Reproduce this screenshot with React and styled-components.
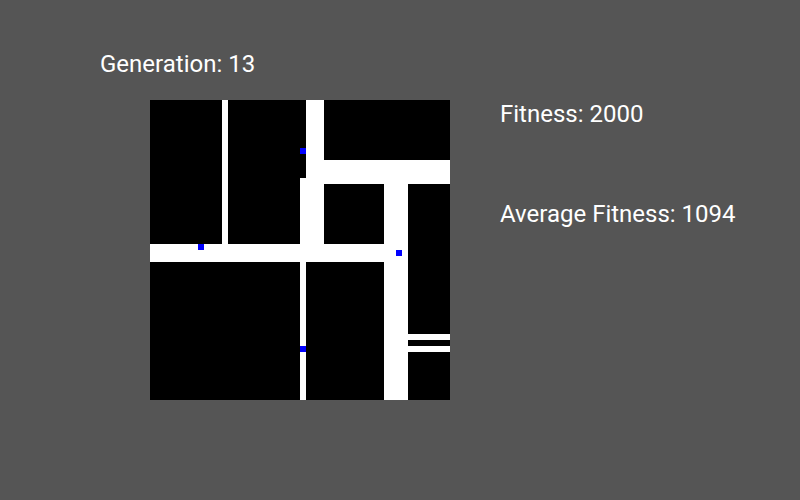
import React from 'react';
import styled, {createGlobalStyle} from "styled-components";

const GlobalStyle = createGlobalStyle`
  html, body {
    margin: 0;
    background-color: #555555;
  }
`

const StyledPage = styled.div`
  display: flex;
  width: 800px;
  height: 500px;
  font-family: Roboto, "Liberation Sans", sans-serif;
  color: white;
`

const StyledLeft = styled.div`
  display: flex;
  flex-direction: column;
  margin-left: 100px;
  padding-top: 50px;
`

const StyledRight = styled.div`
  display: flex;
  flex-direction: column;
  gap: 72px;
  margin-left: 50px;
  padding-top: 100px;
`

const StyledLabel = styled.div`
  font-size: 24px;
  line-height: 28px;
  white-space: nowrap;
`

const StyledBoard = styled.svg`
  display: block;
  margin-top: 22px;
  margin-left: 50px;
  background-color: black;
`

const walls = [
    {x: 72, y: 0, w: 6, h: 144},
    {x: 0, y: 144, w: 234, h: 18},
    {x: 156, y: 0, w: 18, h: 78},
    {x: 150, y: 78, w: 24, h: 66},
    {x: 156, y: 60, w: 144, h: 24},
    {x: 234, y: 84, w: 24, h: 216},
    {x: 150, y: 162, w: 6, h: 138},
    {x: 258, y: 234, w: 42, h: 6},
    {x: 258, y: 246, w: 42, h: 6},
]

const agents = [
    {x: 48, y: 144},
    {x: 150, y: 48},
    {x: 246, y: 150},
    {x: 150, y: 246},
]

const Board = () => (
    <StyledBoard width="300" height="300" viewBox="0 0 300 300" shapeRendering="crispEdges">
        {walls.map((r, i) => <rect key={i} x={r.x} y={r.y} width={r.w} height={r.h} fill="white"/>)}
        {agents.map((a, i) => <rect key={i} x={a.x} y={a.y} width="6" height="6" fill="#0000ff"/>)}
    </StyledBoard>
)

const App = () => {
    return (
        <>
            <GlobalStyle/>
            <StyledPage>
                <StyledLeft>
                    <StyledLabel>Generation: 13</StyledLabel>
                    <Board/>
                </StyledLeft>
                <StyledRight>
                    <StyledLabel>Fitness: 2000</StyledLabel>
                    <StyledLabel>Average Fitness: 1094</StyledLabel>
                </StyledRight>
            </StyledPage>
        </>
    );
};

export default App;
